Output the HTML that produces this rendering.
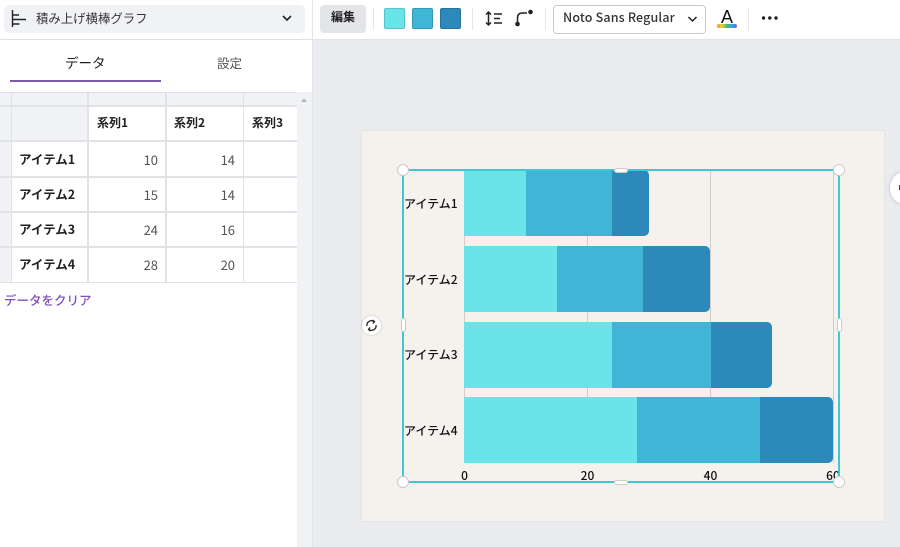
<!DOCTYPE html>
<html lang="ja"><head><meta charset="utf-8"><title>Chart</title>
<style>
html,body{margin:0;padding:0}
body{width:900px;height:547px;position:relative;overflow:hidden;background:#ebecf0;font-family:"Liberation Sans","Noto Sans CJK JP",sans-serif;color:#1a1a1a}
.a{position:absolute}
.j{font-family:"Noto Sans CJK JP","Liberation Sans",sans-serif}
.t{position:absolute;white-space:nowrap;line-height:1}
.g{position:absolute;background:#e1e2e6}
.cell{position:absolute;white-space:nowrap;line-height:1;font-family:"Noto Sans CJK JP",sans-serif}
.lab{font-size:12.500px;font-weight:700;color:#222;left:19px}
.hd{font-size:12px;font-weight:700;color:#222}
.num{font-size:13px;color:#555;text-align:right;width:30px}
.bar{position:absolute;height:66px}
.c1{background:#69e5e9}.c2{background:#40b6d6}.c3{background:#2d89ba;border-radius:0 5px 5px 0}
.clab{position:absolute;left:404px;font:500 12px/1 "Noto Sans CJK JP",sans-serif;color:#111;white-space:nowrap}
.tick{position:absolute;top:470px;font:500 12px/1 "Noto Sans CJK JP",sans-serif;color:#111;transform:translateX(-50%)}
.h{position:absolute;width:12px;height:12px;border-radius:50%;background:#fff;border:1px solid #c9c9c9;box-sizing:border-box}
.sw{position:absolute;top:8px;width:21px;height:21px;border-radius:2px;box-sizing:border-box;border:1px solid rgba(0,0,0,.15)}
.sep{position:absolute;top:8px;width:1px;height:22px;background:#e6e7ea}
</style></head><body>

<!-- top bar -->
<div class="a" style="left:313px;top:0;width:587px;height:39px;background:#fff;border-bottom:1px solid #e3e4e8"></div>
<!-- sidebar -->
<div class="a" style="left:0;top:0;width:312px;height:547px;background:#fff;border-right:1px solid #e3e4e8"></div>
<div class="a" style="left:297px;top:40px;width:15px;height:507px;background:#f1f2f5"></div>
<div class="a" style="left:297px;top:40px;width:15px;height:52px;background:#fff"></div>
<div class="a" style="left:0;top:39px;width:312px;height:1px;background:#dfe0e4"></div>

<div class="a" style="left:4px;top:5px;width:301px;height:28px;background:#f1f2f5;border-radius:5px"></div>
<svg class="a" style="left:10px;top:9px" width="18" height="20" viewBox="0 0 18 20" fill="none" stroke="#222" stroke-width="1.4"><path d="M2.5 1v17M2.5 6H9M2.5 10.500H16M2.500 15H9.500"/></svg>
<div class="t j" style="left:36px;top:12px;font-size:12.400px;color:#333">積み上げ横棒グラフ</div>
<svg class="a" style="left:281px;top:14px" width="12" height="9" viewBox="0 0 12 9" fill="none" stroke="#222" stroke-width="1.600"><path d="M2 2l4 4 4-4"/></svg>

<div class="t j" style="left:65px;top:56px;font-size:13.500px;color:#222">データ</div>
<div class="t j" style="left:217px;top:57px;font-size:12.500px;color:#555">設定</div>
<div class="a" style="left:10px;top:80px;width:151px;height:2px;background:#7d5aa8"></div>

<!-- table -->
<div class="a" style="left:0;top:92px;width:297px;height:191px;background:#fff"></div>
<div class="a" style="left:0;top:93px;width:297px;height:13px;background:#f1f2f5"></div>
<div class="a" style="left:0;top:107px;width:88px;height:34px;background:#f1f2f5"></div>
<div class="a" style="left:0;top:107px;width:11px;height:175px;background:#f1f2f5"></div>
<div class="g" style="left:0;top:92px;width:297px;height:1px"></div>
<div class="g" style="left:0;top:105px;width:297px;height:2px"></div>
<div class="g" style="left:0;top:140px;width:297px;height:2px"></div>
<div class="g" style="left:0;top:176px;width:297px;height:2px"></div>
<div class="g" style="left:0;top:211px;width:297px;height:2px"></div>
<div class="g" style="left:0;top:246px;width:297px;height:2px"></div>
<div class="g" style="left:0;top:282px;width:297px;height:1px"></div>
<div class="g" style="left:11px;top:92px;width:1px;height:190px"></div>
<div class="g" style="left:87px;top:92px;width:2px;height:190px"></div>
<div class="g" style="left:165px;top:92px;width:2px;height:190px"></div>
<div class="g" style="left:243px;top:92px;width:1px;height:190px"></div>
<div class="a" style="left:301px;top:98px;width:0;height:0;border:3px solid transparent;border-bottom:4px solid #b5b6ba;border-top:0"></div>

<div class="cell hd" style="left:97px;top:117px">系列1</div>
<div class="cell hd" style="left:174px;top:117px">系列2</div>
<div class="cell hd" style="left:252px;top:117px">系列3</div>
<div class="cell lab" style="top:153px">アイテム1</div>
<div class="cell lab" style="top:188px">アイテム2</div>
<div class="cell lab" style="top:223px">アイテム3</div>
<div class="cell lab" style="top:258px">アイテム4</div>
<div class="cell num" style="left:128px;top:153px">10</div><div class="cell num" style="left:205px;top:153px">14</div>
<div class="cell num" style="left:128px;top:188px">15</div><div class="cell num" style="left:205px;top:188px">14</div>
<div class="cell num" style="left:128px;top:223px">24</div><div class="cell num" style="left:205px;top:223px">16</div>
<div class="cell num" style="left:128px;top:258px">28</div><div class="cell num" style="left:205px;top:258px">20</div>
<div class="t j" style="left:4px;top:294px;font-size:12.500px;font-weight:500;color:#7d4fc0">データをクリア</div>

<!-- toolbar -->
<div class="a" style="left:320px;top:5px;width:46px;height:28px;background:#e3e5e8;border-radius:4px"></div>
<div class="t j" style="left:331px;top:11px;font-size:12px;font-weight:700;color:#222">編集</div>
<div class="sep" style="left:373px"></div>
<div class="sw" style="left:384px;background:#69e5e9"></div>
<div class="sw" style="left:412px;background:#40b6d6"></div>
<div class="sw" style="left:440px;background:#2d89ba"></div>
<div class="sep" style="left:472px"></div>
<svg class="a" style="left:484px;top:10px" width="20" height="18" viewBox="0 0 20 18" fill="none" stroke="#222" stroke-width="1.500"><path d="M4.500 2v13M2 4.500L4.500 2 7 4.500M2 12.500L4.500 15 7 12.500M10 4h8M10 8.500h6M10 13h8"/></svg>
<svg class="a" style="left:514px;top:8px" width="22" height="20" viewBox="0 0 22 20" fill="none"><path d="M3.500 16V10Q3.500 5 8.500 5H13" stroke="#222" stroke-width="1.500"/><circle cx="3.500" cy="16" r="2.300" fill="#222"/><circle cx="16.500" cy="4" r="2.300" fill="#222"/></svg>
<div class="sep" style="left:545px"></div>
<div class="a" style="left:553px;top:5px;width:151px;height:27px;border:1px solid #c9cbd0;border-radius:4px;background:#fff"></div>
<div class="t j" style="left:563px;top:11px;font-size:12.500px;letter-spacing:.16px;font-weight:500;color:#333">Noto Sans Regular</div>
<svg class="a" style="left:686px;top:14px" width="13" height="10" viewBox="0 0 13 10" fill="none" stroke="#222" stroke-width="1.500"><path d="M2.500 3l4 4 4-4"/></svg>
<div class="t" style="left:721px;top:8px;font-size:18px;color:#111">A</div>
<div class="a" style="left:717px;top:24px;width:20px;height:4px;border-radius:2px;background:linear-gradient(90deg,#f09a30,#e8d040,#40c070,#30a8e8,#6a60d8)"></div>
<div class="sep" style="left:748px"></div>
<svg class="a" style="left:761px;top:15px" width="18" height="6" viewBox="0 0 18 6" fill="#222"><circle cx="2.500" cy="3" r="1.700"/><circle cx="8.800" cy="3" r="1.700"/><circle cx="15" cy="3" r="1.700"/></svg>

<!-- canvas -->
<div class="a" style="left:362px;top:131px;width:522px;height:390px;background:#f5f2ee;box-shadow:0 0 3px rgba(0,0,0,.08)"></div>
<div class="a" style="left:587px;top:170px;width:1px;height:293px;background:#cfcecb"></div>
<div class="a" style="left:710px;top:170px;width:1px;height:293px;background:#cfcecb"></div>
<div class="a" style="left:833px;top:170px;width:1px;height:293px;background:#cfcecb"></div>
<div class="a" style="left:464px;top:170px;width:1px;height:293px;background:#cfcecb"></div>

<div class="bar c1" style="left:464px;top:170px;width:62px"></div><div class="bar c2" style="left:526px;top:170px;width:86px"></div><div class="bar c3" style="left:612px;top:170px;width:37px"></div>
<div class="bar c1" style="left:464px;top:246px;width:93px"></div><div class="bar c2" style="left:557px;top:246px;width:86px"></div><div class="bar c3" style="left:643px;top:246px;width:67px"></div>
<div class="bar c1" style="left:464px;top:322px;width:148px;height:65.500px"></div><div class="bar c2" style="left:612px;top:322px;width:99px;height:65.500px"></div><div class="bar c3" style="left:711px;top:322px;width:61px;height:65.500px"></div>
<div class="bar c1" style="left:464px;top:397px;width:173px"></div><div class="bar c2" style="left:637px;top:397px;width:123px"></div><div class="bar c3" style="left:760px;top:397px;width:73px"></div>

<div class="clab" style="top:198px">アイテム1</div>
<div class="clab" style="top:274px">アイテム2</div>
<div class="clab" style="top:349px">アイテム3</div>
<div class="clab" style="top:425px">アイテム4</div>
<div class="tick" style="left:464.500px">0</div>
<div class="tick" style="left:587.500px">20</div>
<div class="tick" style="left:710.500px">40</div>
<div class="tick" style="left:833px">60</div>

<!-- selection -->
<div class="a" style="left:402px;top:169px;width:436px;height:312px;border:2px solid #3fc8cf;box-sizing:border-box;height:314px;width:438px"></div>
<div class="h" style="left:397px;top:164px"></div>
<div class="h" style="left:833px;top:164px"></div>
<div class="h" style="left:397px;top:476px"></div>
<div class="h" style="left:833px;top:476px"></div>
<div class="a" style="left:614px;top:168px;width:14px;height:5px;background:#fff;border:1px solid #ccc;border-radius:3px;box-sizing:border-box"></div>
<div class="a" style="left:614px;top:480px;width:14px;height:5px;background:#fff;border:1px solid #ccc;border-radius:3px;box-sizing:border-box"></div>
<div class="a" style="left:401px;top:318px;width:5px;height:14px;background:#fff;border:1px solid #ccc;border-radius:3px;box-sizing:border-box"></div>
<div class="a" style="left:837px;top:318px;width:5px;height:14px;background:#fff;border:1px solid #ccc;border-radius:3px;box-sizing:border-box"></div>

<!-- rotate -->
<div class="a" style="left:362px;top:316px;width:19px;height:19px;border-radius:50%;background:#fff;box-shadow:0 0 2px rgba(0,0,0,.25)"></div>
<svg class="a" style="left:365px;top:319px" width="13" height="13" viewBox="0 0 13 13" fill="none" stroke="#222" stroke-width="1.300"><path d="M2 7A4.500 4.500 0 0 1 9 2.500M11 6A4.500 4.500 0 0 1 4 10.500M7.500 1l2 1.500-1.500 2M5.500 12l-2-1.500 1.500-2"/></svg>

<!-- right handle -->
<div class="a" style="left:890px;top:172px;width:30px;height:32px;border-radius:50%;background:#fff;box-shadow:0 0 4px rgba(0,0,0,.2)"></div>
<div class="a" style="left:899px;top:185px;width:1px;height:5px;background:#444"></div>
</body></html>
